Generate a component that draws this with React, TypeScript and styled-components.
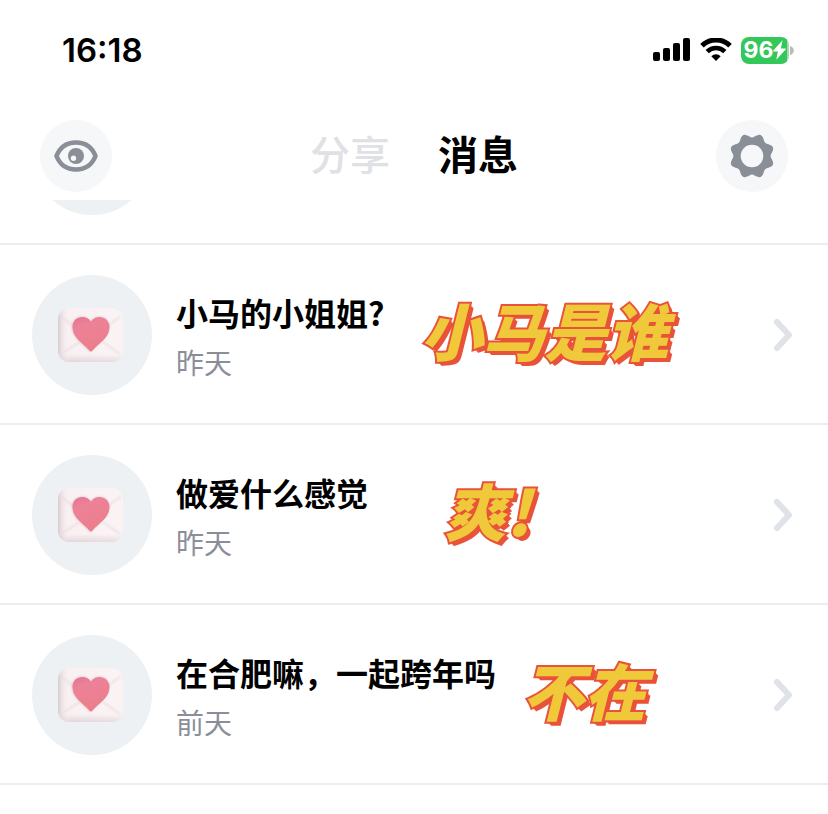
import React from "react";
import styled, { createGlobalStyle } from "styled-components";

const GlobalStyle = createGlobalStyle`
  * { box-sizing: border-box; }
  body {
    margin: 0;
    background: #fff;
    color: #000;
    font-family: Inter, "Noto Sans CJK SC", sans-serif;
  }
  button { border: 0; padding: 0; background: none; font: inherit; color: inherit; cursor: pointer; }
`;

const StatusBar = styled.div`
  display: flex;
  align-items: center;
  justify-content: space-between;
  height: 100px;
  padding: 0 34px 0 62px;
`;

const Clock = styled.time`
  font-size: 33px;
  line-height: 40px;
  font-weight: 600;
`;

const StatusIcons = styled.div`
  display: flex;
  align-items: center;
  gap: 9px;
`;

const Battery = styled.div`
  display: flex;
  align-items: center;
  gap: 1px;
`;

const BatteryLevel = styled.div`
  display: flex;
  align-items: center;
  justify-content: center;
  width: 48px;
  height: 27px;
  border-radius: 8px;
  background: linear-gradient(90deg, #34c759 46px, #a3d9b0 46px);
  color: #fff;
  font-size: 23px;
  line-height: 27px;
  font-weight: 700;
`;

const Header = styled.header`
  display: flex;
  align-items: center;
  justify-content: space-between;
  height: 100px;
  padding: 12px 40px 0;
`;

const RoundButton = styled.button`
  display: grid;
  place-items: center;
  width: 72px;
  height: 72px;
  border-radius: 50%;
  background: #f5f7f9;
`;

const Tabs = styled.nav`
  display: flex;
  gap: 48px;
  padding-bottom: 6px;
`;

const Tab = styled.button<{ $active?: boolean }>`
  font-family: "Noto Sans CJK SC", sans-serif;
  font-size: 40px;
  line-height: 56px;
  font-weight: ${(p) => (p.$active ? 700 : 500)};
  color: ${(p) => (p.$active ? "#000" : "#dfe1e5")};
`;

const List = styled.ul`
  list-style: none;
  margin: 0;
  padding: 0;
`;

const Item = styled.li`
  border-bottom: 2px solid #ededee;
`;

const ScrolledItem = styled(Item)`
  display: flex;
  align-items: flex-end;
  height: 45px;
  padding: 0 32px 28px;
  overflow: hidden;
`;

const Row = styled.button`
  display: flex;
  align-items: center;
  width: 100%;
  height: 178px;
  padding: 2px 32px 0;
  text-align: left;
`;

const Avatar = styled.span`
  display: grid;
  place-items: center;
  flex: none;
  width: 120px;
  height: 120px;
  border-radius: 50%;
  background: #edf1f4;
`;

const Message = styled.span`
  display: flex;
  flex-direction: column;
  gap: 6px;
  margin-left: 24px;
  white-space: nowrap;
  font-family: "Noto Sans CJK SC", sans-serif;
`;

const Title = styled.span`
  font-size: 32px;
  line-height: 48px;
  font-weight: 700;
`;

const Day = styled.span`
  font-size: 28px;
  line-height: 40px;
  color: #8b8e99;
`;

const Sticker = styled.strong<{ $gap: number }>`
  margin-left: ${(p) => p.$gap}px;
  padding-bottom: 12px;
  font-family: "Noto Sans CJK SC", sans-serif;
  font-size: 62px;
  line-height: 80px;
  font-weight: 900;
  font-style: italic;
  white-space: nowrap;
  color: #f0c93b;
  -webkit-text-stroke: 4px #e9533a;
  paint-order: stroke fill;
  text-shadow: 1px 1px #e9533a, 2px 2px #e9533a, 3px 3px #e9533a, 4px 4px #e9533a;
`;

const Chevron = styled.svg`
  flex: none;
  margin-left: auto;
`;

const SignalIcon = () => (
  <svg width="38" height="24" viewBox="0 0 38 24" aria-hidden="true">
    <rect x="0" y="14" width="7" height="9" rx="2" />
    <rect x="10" y="10" width="7" height="13" rx="2" />
    <rect x="20" y="5" width="7" height="18" rx="2" />
    <rect x="30" y="0" width="7" height="23" rx="2" />
  </svg>
);

const WifiIcon = () => (
  <svg width="32" height="24" viewBox="0 0 32 24" aria-hidden="true">
    <path d="M2 7.700a20 20 0 0 1 28 0" fill="none" stroke="#000" strokeWidth="5" />
    <path d="M7.200 13.600a12.400 12.400 0 0 1 17.600 0" fill="none" stroke="#000" strokeWidth="4.600" />
    <path d="M11.300 18.200a6.800 6.800 0 0 1 9.400 0L16 23z" />
  </svg>
);

const BoltIcon = () => (
  <svg width="13" height="20" viewBox="0 0 12 18" aria-hidden="true">
    <path d="M8.800 0L.3 9.400c-.4.5-.1 1 .4 1h3.800L3 18l8.700-9.500c.4-.5.1-1-.4-1H7.300z" fill="#fff" />
  </svg>
);

const BatteryTip = () => (
  <svg width="4" height="9" viewBox="0 0 4 9" aria-hidden="true">
    <path d="M0 0c5 1 5 8 0 9z" fill="#b9b9b9" />
  </svg>
);

const EyeIcon = () => (
  <svg width="44" height="34" viewBox="0 0 44 34" aria-hidden="true">
    <path
      d="M2.500 17C5.500 9.500 12 3.500 22 3.500S38.500 9.500 41.500 17C38.500 24.500 32 30.500 22 30.500S5.500 24.500 2.500 17z"
      fill="none"
      stroke="#898e97"
      strokeWidth="4.600"
      strokeLinejoin="round"
    />
    <circle cx="22" cy="17" r="8" fill="#898e97" />
    <circle cx="19.500" cy="19.300" r="2.700" fill="#f5f7f9" />
  </svg>
);

const gearPoints = Array.from({ length: 96 }, (_, i) => {
  const a = (i / 96) * Math.PI * 2;
  const r = 20.6 - 2 * Math.cos(a * 8);
  return `${(22 + r * Math.cos(a)).toFixed(2)} ${(22 + r * Math.sin(a)).toFixed(2)}`;
});

const GearIcon = () => (
  <svg width="44" height="44" viewBox="0 0 44 44" aria-hidden="true">
    <path d={`M${gearPoints.join("L")}z`} fill="#898e97" />
    <circle cx="22" cy="22" r="11.300" fill="#f5f7f9" />
  </svg>
);

const LoveLetterIcon = () => (
  <svg width="70" height="60" viewBox="0 0 70 60" aria-hidden="true">
    <defs>
      <linearGradient id="paper" x1="0" y1="0" x2="0" y2="1">
        <stop offset="0" stopColor="#f9f0f2" />
        <stop offset="0.85" stopColor="#f9f0f2" />
        <stop offset="1" stopColor="#e3d6da" />
      </linearGradient>
      <linearGradient id="edge" x1="0" y1="0" x2="1" y2="0">
        <stop offset="0" stopColor="#cfc3c7" stopOpacity="0.8" />
        <stop offset="0.08" stopColor="#dfd5d8" stopOpacity="0.3" />
        <stop offset="0.2" stopColor="#fff" stopOpacity="0" />
        <stop offset="1" stopColor="#fff" stopOpacity="0.2" />
      </linearGradient>
      <linearGradient id="heart" x1="0" y1="0" x2="0.4" y2="1">
        <stop offset="0" stopColor="#e4728d" />
        <stop offset="0.3" stopColor="#ed8198" />
        <stop offset="1" stopColor="#ec7e8b" />
      </linearGradient>
      <filter id="soft" x="-20%" y="-20%" width="140%" height="140%">
        <feGaussianBlur stdDeviation="0.8" />
      </filter>
    </defs>
    <rect x="1" y="3" width="65" height="54" rx="11" fill="url(#paper)" />
    <rect x="1" y="3" width="65" height="54" rx="11" fill="url(#edge)" />
    <path
      d="M3 11l27 20q4 4 8 0L64 11M4 49l19-12M63 49L46 37"
      fill="none"
      stroke="#e6dade"
      strokeWidth="1.400"
      filter="url(#soft)"
    />
    <path d="M33 47C27 39.500 15 33 15 22c0-11 13-14 18.500-5C39 8 52 11 52 22c0 11-13 17.500-19 25z" fill="#cda3ae" opacity="0.6" filter="url(#soft)" />
    <path d="M34 46.500Q33 46.500 32 45C26 38 15.500 33 15.500 22c0-10.500 13-13.500 18.500-5.500 5.500-8 18.500-5 18.500 5.500C52.500 33 42 38 36 45Q35 46.500 34 46.500z" fill="url(#heart)" />
  </svg>
);

const messages = [
  { title: "小马的小姐姐?", day: "昨天", sticker: "小马是谁", gap: 36 },
  { title: "做爱什么感觉", day: "昨天", sticker: "爽!", gap: 76 },
  { title: "在合肥嘛，一起跨年吗", day: "前天", sticker: "不在", gap: 26 },
];

export default function App() {
  return (
    <>
      <GlobalStyle />
      <StatusBar>
        <Clock>16:18</Clock>
        <StatusIcons>
          <SignalIcon />
          <WifiIcon />
          <Battery>
            <BatteryLevel>
              96
              <BoltIcon />
            </BatteryLevel>
            <BatteryTip />
          </Battery>
        </StatusIcons>
      </StatusBar>
      <Header>
        <RoundButton aria-label="浏览">
          <EyeIcon />
        </RoundButton>
        <Tabs>
          <Tab>分享</Tab>
          <Tab $active aria-current="page">消息</Tab>
        </Tabs>
        <RoundButton aria-label="设置">
          <GearIcon />
        </RoundButton>
      </Header>
      <List>
        <ScrolledItem>
          <Avatar />
        </ScrolledItem>
        {messages.map((m) => (
          <Item key={m.title}>
            <Row>
              <Avatar>
                <LoveLetterIcon />
              </Avatar>
              <Message>
                <Title>{m.title}</Title>
                <Day>{m.day}</Day>
              </Message>
              <Sticker $gap={m.gap}>{m.sticker}</Sticker>
              <Chevron width="24" height="38" viewBox="0 0 24 38" aria-hidden="true">
                <path d="M5 6l12 13L5 32" fill="none" stroke="#dfe2e6" strokeWidth="6" strokeLinecap="round" strokeLinejoin="round" />
              </Chevron>
            </Row>
          </Item>
        ))}
      </List>
    </>
  );
}
